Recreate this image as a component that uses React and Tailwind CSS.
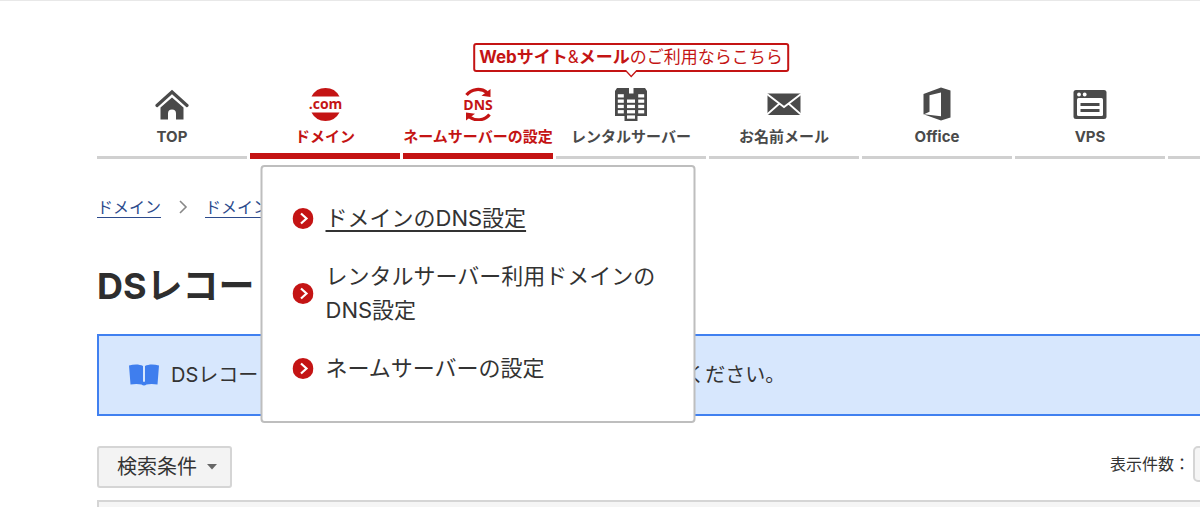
import { useState } from "react";

function HomeIcon() {
  return (
    <svg viewBox="0 0 34 34" className="h-[34px] w-[34px]" fill="currentColor" aria-hidden="true">
      <path d="M2 18.500 17 5l15 13.500" fill="none" stroke="currentColor" strokeWidth="3.200" strokeLinecap="round" />
      <path d="M5.500 20.500 17 10.500l11.500 10V32.500H21v-6a4 4 0 0 0-8 0v6H5.500z" />
    </svg>
  );
}

function DomainIcon() {
  return (
    <svg viewBox="0 0 34 34" className="h-[34px] w-[34px]" fill="currentColor" aria-hidden="true">
      <path d="M3.500 9.500a15.800 15.800 0 0 1 28 0z" />
      <path d="M3.500 25.500a15.800 15.800 0 0 0 28 0z" />
      <text x="17.500" y="21.500" textAnchor="middle" className="font-['Open_Sans'] text-[14px] font-bold">.com</text>
    </svg>
  );
}

function DnsIcon() {
  return (
    <svg viewBox="0 0 34 34" className="h-[34px] w-[34px]" fill="currentColor" aria-hidden="true">
      <path d="M5.500 8C10.500 1.500 20 .8 26 5.500" fill="none" stroke="currentColor" strokeWidth="3.200" />
      <path d="M29.500 2v8L20.500 8.800z" />
      <path d="M28.500 27.500C23.500 34 14 34.200 8 29.800" fill="none" stroke="currentColor" strokeWidth="3.200" />
      <path d="M5 33.500v-8l9 1.200z" />
      <text x="17" y="22.500" textAnchor="middle" className="font-['Open_Sans'] text-[14px] font-bold">DNS</text>
    </svg>
  );
}

function ServerIcon() {
  return (
    <svg viewBox="0 0 34 34" className="h-[34px] w-[34px]" aria-hidden="true">
      <path fill="currentColor" d="M3 1h12v5.500h4.500V1H31l2 3v25h-9.500v5H10.500v-5H1V4z" />
      <g fill="#fff">
        {[7.2, 12.5, 17.8, 23.1].map((y) => (
          <g key={y}>
            <rect x="3.800" y={y} width="6" height="3.300" />
            <rect x="24.200" y={y} width="6" height="3.300" />
          </g>
        ))}
        {[12.5, 17.8, 23.1, 28.4].map((y) => (
          <rect key={y} x="13" y={y} width="8" height="3.300" />
        ))}
      </g>
    </svg>
  );
}

function MailIcon() {
  return (
    <svg viewBox="0 0 34 34" className="h-[34px] w-[34px]" aria-hidden="true">
      <path fill="currentColor" d="M0.500 6.500h33V28h-33z" />
      <path d="M0 7 17 20 34 7M0 27.500 12.500 16.500M34 27.500 21.500 16.500" fill="none" stroke="#fff" strokeWidth="1.800" />
    </svg>
  );
}

function OfficeIcon() {
  return (
    <svg viewBox="0 0 34 34" className="h-[34px] w-[34px]" aria-hidden="true">
      <path fill="currentColor" fillRule="evenodd" d="M3.500 7 21 .5l9.500 3v27L21 33.500 3.500 27.200zM9.500 8.200v16.500l-5.500 2.500 17 2V5.500z" />
    </svg>
  );
}

function VpsIcon() {
  return (
    <svg viewBox="0 0 34 34" className="h-[34px] w-[34px]" aria-hidden="true">
      <rect x="0.500" y="3" width="33" height="29" rx="2.500" fill="currentColor" />
      <rect x="4" y="11" width="26" height="18" rx="1.500" fill="#fff" />
      <circle cx="6" cy="7.500" r="1.900" fill="#fff" />
      <circle cx="11.700" cy="7.500" r="1.900" fill="#fff" />
      <path d="M7.500 17.500h19M7.500 23.500h19" stroke="currentColor" strokeWidth="3" />
    </svg>
  );
}

function BookIcon() {
  return (
    <svg viewBox="0 0 30 22" className="h-[22px] w-[30px] shrink-0" fill="#3f7eee" aria-hidden="true">
      <path d="M0 1.500C5 0 10.500 0 14 2v15.500c1 .6 1 .6 2 0V2c3.500-2 9-2 14-.5L28.500 20.500c-4-.8-8-.8-11 0-1.500 1.300-3.500 1.300-5 0-3-.8-7-.8-11 0z" />
    </svg>
  );
}

function ArrowBullet() {
  return (
    <svg viewBox="0 0 21 21" className="h-[21px] w-[21px] shrink-0" aria-hidden="true">
      <circle cx="10.500" cy="10.500" r="10.500" fill="#c41414" />
      <path d="m8.500 5.500 5.500 5-5.500 5" fill="none" stroke="#fff" strokeWidth="2.200" />
    </svg>
  );
}

const navItems = [
  { label: "TOP", icon: HomeIcon },
  { label: "ドメイン", icon: DomainIcon, active: true },
  { label: "ネームサーバーの設定", icon: DnsIcon, active: true, menu: true },
  { label: "レンタルサーバー", icon: ServerIcon, balloon: true },
  { label: "お名前メール", icon: MailIcon },
  { label: "Office", icon: OfficeIcon },
  { label: "VPS", icon: VpsIcon },
];

const menuItems = [
  "ドメインのDNS設定",
  "レンタルサーバー利用ドメインのDNS設定",
  "ネームサーバーの設定",
];

function Balloon() {
  return (
    <div className="absolute bottom-full left-1/2 mb-[15px] -translate-x-1/2 rounded-[3px] border-2 border-[#c41414] bg-white px-1 text-[17px] leading-[25px] whitespace-nowrap text-[#c41414]">
      <strong>Webサイト</strong>&amp;<strong>メール</strong>のご利用ならこちら
      <svg viewBox="0 0 14 8" className="absolute top-full left-1/2 h-[8px] w-[14px] -translate-x-1/2" aria-hidden="true">
        <path d="M1-2h12v2L7 6.500 1 0z" fill="#fff" />
        <path d="M1 0 7 6.500 13 0" fill="none" stroke="#c41414" strokeWidth="1.300" />
      </svg>
    </div>
  );
}

function DropMenu({ current }) {
  return (
    <ul className="absolute top-full left-1/2 z-10 mt-[6px] flex w-[435px] -translate-x-1/2 flex-col gap-6 rounded-[4px] border-2 border-[#bebebe] bg-white px-[30px] pt-[34px] pb-9 text-[22px] leading-[34px] text-[#333]">
      {menuItems.map((item) => (
        <li key={item}>
          <a href="#" className="flex items-center gap-3">
            <ArrowBullet />
            <span className={item === current ? "underline decoration-2 underline-offset-4" : ""}>{item}</span>
          </a>
        </li>
      ))}
    </ul>
  );
}

function GlobalNav() {
  return (
    <nav className="flex gap-[3px] pt-[86px]">
      {navItems.map(({ label, icon: Icon, active, menu, balloon }) => (
        <div key={label} className="relative w-[150px] shrink-0">
          {balloon && <Balloon />}
          <a
            href="#"
            className={
              active
                ? "flex h-[72px] flex-col items-center gap-[6px] border-b-[6px] border-[#c41414] text-[15px] leading-5 font-bold whitespace-nowrap text-[#c41414]"
                : "flex h-[72px] flex-col items-center gap-[6px] border-b-[3px] border-[#d0d0d0] text-[15px] leading-5 font-bold whitespace-nowrap text-[#4a4a4a]"
            }
          >
            <Icon />
            {label}
          </a>
          {menu && <DropMenu current={menuItems[0]} />}
        </div>
      ))}
      <div className="h-[72px] w-[150px] shrink-0 border-b-[3px] border-[#d0d0d0]" />
    </nav>
  );
}

export default function App() {
  const [perPage, setPerPage] = useState("");

  return (
    <div className="flex h-screen flex-col overflow-hidden border-t border-[#e8e8e8] bg-white pl-[97px] font-[Inter,'Noto_Sans_CJK_JP',sans-serif] text-[#333]">
      <GlobalNav />

      <div className="mt-9 flex items-center gap-[17px] text-[16px] leading-6 text-[#2c4a8c]">
        <a href="#" className="underline underline-offset-4">ドメイン</a>
        <svg viewBox="0 0 10 14" className="h-[14px] w-[10px]" aria-hidden="true">
          <path d="m2 1 6 6-6 6" fill="none" stroke="#888" strokeWidth="1.600" />
        </svg>
        <a href="#" className="underline underline-offset-4">ドメイン</a>
      </div>

      <h1 className="mt-[45px] text-[36px] leading-[44px] font-bold text-[#2e2e2e]">DSレコード</h1>

      <div className="mt-[26px] flex items-center gap-3 border-y-2 border-l-2 border-[#4080f0] bg-[#d7e7fd] px-[30px] py-6 text-[20px] leading-[30px] whitespace-nowrap">
        <BookIcon />
        <p>
          DSレコードの設定方法については、<a href="#" className="mx-1">こちら</a>を必ずご確認ください。
        </p>
      </div>

      <div className="mt-[30px] flex items-start justify-between">
        <button
          type="button"
          className="flex items-center gap-[10px] rounded-[3px] border-2 border-[#d5d5d5] bg-[#f3f3f3] py-1 pr-[13px] pl-[18px] text-[20px] leading-[30px]"
        >
          検索条件
          <svg viewBox="0 0 10 6" className="h-[6px] w-[10px]" aria-hidden="true">
            <path d="M0 0h10L5 5.500z" fill="#666" />
          </svg>
        </button>
        <div className="-mr-[73px] flex items-center gap-[3px]">
          <label htmlFor="per-page" className="text-[16px] leading-[36px]">表示件数：</label>
          <select
            id="per-page"
            value={perPage}
            onChange={(e) => setPerPage(e.target.value)}
            className="h-9 w-20 appearance-none rounded-[5px] border-2 border-[#d5d5d5] bg-[#f5f5f5]"
          >
            <option value="" />
          </select>
        </div>
      </div>

      <div className="mt-3 grow border-t-2 border-l-2 border-[#d5d5d5] bg-[#f5f5f5]" />
    </div>
  );
}
